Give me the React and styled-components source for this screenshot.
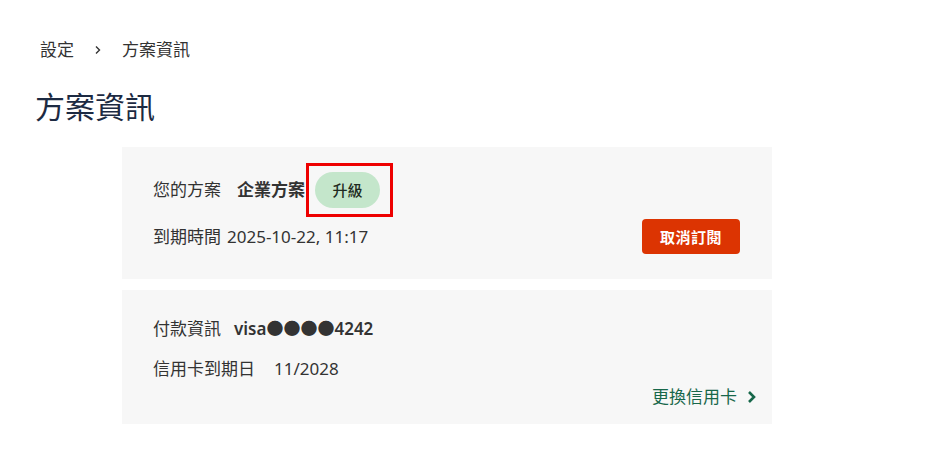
import React from "react";
import styled, { createGlobalStyle } from "styled-components";

const GlobalStyle = createGlobalStyle`
  body {
    margin: 0;
    background: #ffffff;
    font-family: "Noto Sans", "Noto Sans CJK TC", sans-serif;
    color: #333333;
  }
`;

const Page = styled.div`
  padding: 36px 0 0 36px;
  width: 947px;
  box-sizing: border-box;
`;

const Breadcrumb = styled.nav`
  display: flex;
  align-items: center;
  gap: 19px;
  padding-left: 4px;
  font-size: 17px;
  line-height: 28px;
  color: #333333;
`;

const Crumb = styled.span``;

const Title = styled.h1`
  margin: 23px 0 0 -1px;
  font-size: 30px;
  font-weight: 400;
  line-height: 40px;
  color: #1c2a42;
`;

const Cards = styled.div`
  display: flex;
  flex-direction: column;
  gap: 11px;
  width: 650px;
  margin: 20px 0 0 86px;
`;

const Card = styled.section`
  background: #f7f7f7;
  padding: ${(p) => p.$pad};
  display: flex;
  flex-direction: column;
  gap: ${(p) => p.$gap};
`;

const Row = styled.div`
  display: flex;
  align-items: center;
  justify-content: space-between;
  margin-top: ${(p) => p.$top || "0"};
`;

const Line = styled.div`
  display: flex;
  align-items: center;
  font-size: 17px;
  line-height: 24px;
  color: #333333;
`;

const Label = styled.span`
  margin-right: ${(p) => p.$space || "12px"};
`;

const Strong = styled.span`
  font-weight: ${(p) => p.$weight || 700};
  font-size: 17px;
`;

const Highlight = styled.span`
  display: inline-flex;
  border: 3px solid #ee0000;
  padding: 6px 10px 6px 6px;
  margin: -13px 0 -13px 1px;
`;

const Badge = styled.span`
  display: inline-flex;
  align-items: center;
  justify-content: center;
  width: 65px;
  height: 36px;
  border-radius: 18px;
  background: #c4e6cb;
  color: #1f2b22;
  font-size: 15px;
  font-weight: 500;
`;

const DangerButton = styled.button`
  border: 0;
  border-radius: 4px;
  background: #dc3402;
  color: #ffffff;
  width: 98px;
  height: 35px;
  font-family: inherit;
  font-size: 15px;
  font-weight: 700;
  letter-spacing: 0.5px;
  cursor: pointer;
`;

const LinkRow = styled.div`
  display: flex;
  justify-content: flex-end;
  margin-top: -12px;
`;

const TextLink = styled.a`
  display: inline-flex;
  align-items: center;
  gap: 9px;
  color: #17674a;
  font-size: 17px;
  line-height: 24px;
  text-decoration: none;
`;

export default function App() {
  return (
    <>
      <GlobalStyle />
      <Page>
        <Breadcrumb>
          <Crumb>設定</Crumb>
          <svg width="10" height="10" viewBox="0 0 10 10">
            <path d="M3 1.5 L6.5 5 L3 8.5" fill="none" stroke="#333" strokeWidth="1.4" />
          </svg>
          <Crumb>方案資訊</Crumb>
        </Breadcrumb>
        <Title>方案資訊</Title>
        <Cards>
          <Card $pad="29px 32px 25px 31px" $gap="0px">
            <Line>
              <Label $space="16px">您的方案</Label>
              <Strong>企業方案</Strong>
              <Highlight>
                <Badge>升級</Badge>
              </Highlight>
            </Line>
            <Row $top="15px">
              <Line>
                <Label $space="6px">到期時間</Label>
                <span>2025-10-22, 11:17</span>
              </Line>
              <DangerButton>取消訂閱</DangerButton>
            </Row>
          </Card>
          <Card $pad="27px 15px 15px 31px" $gap="16px">
            <Line>
              <Label $space="13px">付款資訊</Label>
              <Strong $weight={600}>visa●●●●4242</Strong>
            </Line>
            <Line>
              <Label $space="19px">信用卡到期日</Label>
              <span>11/2028</span>
            </Line>
            <LinkRow>
              <TextLink href="#">
                更換信用卡
                <svg width="11" height="14" viewBox="0 0 11 14">
                  <path d="M3 2 L8 7 L3 12" fill="none" stroke="#17674a" strokeWidth="2.6" />
                </svg>
              </TextLink>
            </LinkRow>
          </Card>
        </Cards>
      </Page>
    </>
  );
}
